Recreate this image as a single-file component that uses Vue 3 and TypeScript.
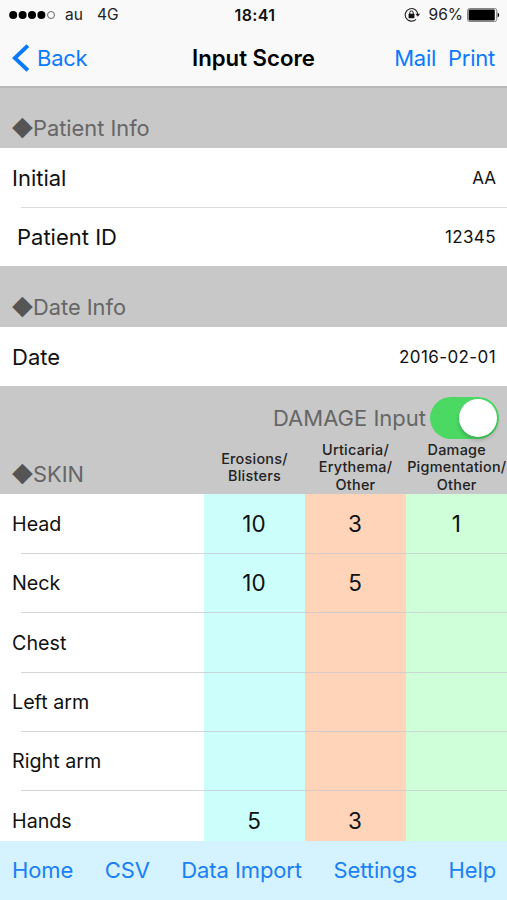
<script setup lang="ts">
import { ref } from 'vue'

interface ScoreRow {
  part: string
  scores: (number | null)[]
}

const damageInput = ref(true)

const rows: ScoreRow[] = [
  { part: 'Head', scores: [10, 3, 1] },
  { part: 'Neck', scores: [10, 5, null] },
  { part: 'Chest', scores: [null, null, null] },
  { part: 'Left arm', scores: [null, null, null] },
  { part: 'Right arm', scores: [null, null, null] },
  { part: 'Hands', scores: [5, 3, null] },
]

const columns: string[][] = [
  ['Erosions/', 'Blisters'],
  ['Urticaria/', 'Erythema/', 'Other'],
  ['Damage', 'Pigmentation/', 'Other'],
]

const tabs: string[] = ['Home', 'CSV', 'Data Import', 'Settings', 'Help']
</script>

<template>
  <div class="screen">
    <header class="top">
      <div class="status">
        <div class="carrier">
          <svg class="signal" width="47" height="10" viewBox="0 0 47 10">
            <circle cx="4.2" cy="5" r="4" />
            <circle cx="13.6" cy="5" r="4" />
            <circle cx="23" cy="5" r="4" />
            <circle cx="32.4" cy="5" r="4" />
            <circle cx="42" cy="5" r="3.5" fill="none" stroke="#555" stroke-width="0.9" />
          </svg>
          <span class="operator">au</span>
          <span>4G</span>
        </div>
        <span class="clock">18:41</span>
        <div class="power">
          <svg class="lock" width="17" height="16" viewBox="0 0 17 16">
            <path d="M12 12.3A6.3 6.3 0 1 1 13.8 7.2" fill="none" stroke="#222" stroke-width="1.1" />
            <path d="M11.4 6.8h4.8l-2.4 3z" fill="#222" />
            <rect x="4.6" y="6.8" width="5.8" height="4.4" rx="0.5" fill="#111" />
            <path d="M5.8 7V5.6a1.7 1.7 0 0 1 3.4 0V7" fill="none" stroke="#111" stroke-width="1" />
          </svg>
          <span class="percent">96%</span>
          <svg class="battery" width="33" height="14" viewBox="0 0 33 14">
            <rect x="0.5" y="0.5" width="29.2" height="13" rx="2" fill="none" stroke="#777" stroke-width="0.9" />
            <rect x="1.6" y="1.6" width="26.2" height="10.8" rx="0.8" />
            <path d="M30.6 4.6a2.6 2.6 0 0 1 0 4.8z" />
          </svg>
        </div>
      </div>
      <nav class="navbar">
        <a class="back">
          <svg width="17" height="28" viewBox="0 0 17 28">
            <path d="M15.8 1.6L2.8 14l13 12.4" fill="none" stroke="#0a7aff" stroke-width="3.9" />
          </svg>
          <span>Back</span>
        </a>
        <h1>Input Score</h1>
        <div class="actions"><a class="mail">Mail</a><a class="print">Print</a></div>
      </nav>
    </header>

    <h2 class="section"><span class="mark">◆</span>Patient Info</h2>
    <div class="row">
      <span>Initial</span><span class="value">AA</span>
    </div>
    <div class="row nested">
      <span>Patient ID</span><span class="value digits">12345</span>
    </div>

    <h2 class="section date-head"><span class="mark">◆</span>Date Info</h2>
    <div class="row date-row">
      <span>Date</span><span class="value digits">2016-02-01</span>
    </div>

    <section class="skin-head">
      <div class="toggle-line">
        <span class="toggle-label">DAMAGE Input</span>
        <button class="switch" :class="{ on: damageInput }" @click="damageInput = !damageInput">
          <span class="knob"></span>
        </button>
      </div>
      <div class="skin-columns">
        <h2 class="skin-title"><span class="mark">◆</span>SKIN</h2>
        <div v-for="(lines, i) in columns" :key="i" class="column-name">
          <span v-for="line in lines" :key="line">{{ line }}</span>
        </div>
      </div>
    </section>

    <main class="scores">
      <div v-for="row in rows" :key="row.part" class="score-row">
        <span class="part">{{ row.part }}</span>
        <span v-for="(score, i) in row.scores" :key="i" class="score" :class="'tone-' + i">{{ score }}</span>
      </div>
    </main>

    <footer class="toolbar">
      <a v-for="tab in tabs" :key="tab">{{ tab }}</a>
    </footer>
  </div>
</template>

<style>
body {
  margin: 0;
}
</style>

<style scoped>
.screen {
  width: 507px;
  height: 900px;
  overflow: hidden;
  display: flex;
  flex-direction: column;
  background: #fff;
  color: #111;
  font-family: Inter, "Liberation Sans", sans-serif;
  font-size: 22px;
  line-height: 26px;
}
.screen > * {
  flex-shrink: 0;
}
h1,
h2 {
  margin: 0;
  font-weight: 400;
}
.top {
  height: 88px;
  box-sizing: border-box;
  background: #f9f9f9;
  border-bottom: 2px solid #b8b8b8;
}
.status {
  height: 30px;
  display: grid;
  grid-template-columns: 1fr auto 1fr;
  align-items: center;
  padding: 0 7px 0 9px;
  font-size: 15.5px;
  color: #222;
}
.carrier,
.power {
  display: flex;
  align-items: center;
}
.power {
  justify-content: flex-end;
}
.signal,
.lock,
.battery {
  position: relative;
  top: -0.5px;
}
.operator {
  margin: 0 14px 0 9px;
}
.clock {
  font-size: 16px;
  font-weight: 600;
  letter-spacing: 0.4px;
  padding-left: 1px;
  color: #111;
}
.percent {
  margin: 0 4px 0 8px;
}
.navbar {
  height: 56px;
  display: grid;
  grid-template-columns: 1fr auto 1fr;
  align-items: center;
  padding: 0 12px;
}
.navbar a {
  color: #0a7aff;
  letter-spacing: -0.25px;
}
.back {
  display: flex;
  align-items: center;
  gap: 8px;
}
h1 {
  font-size: 22.2px;
  font-weight: 600;
  color: #000;
}
.actions {
  display: flex;
  justify-content: flex-end;
  gap: 12px;
}
.section {
  height: 60px;
  box-sizing: border-box;
  padding: 27px 12px 0;
  display: flex;
  background: #c8c8c8;
  color: #666;
  font-size: 21.8px;
  line-height: 26px;
}
.mark {
  width: 21px;
  font-family: "DejaVu Sans", sans-serif;
  font-size: 27px;
  line-height: 22px;
  color: #555;
}
.row {
  height: 59px;
  box-sizing: border-box;
  display: flex;
  align-items: center;
  justify-content: space-between;
  padding: 1px 11px 0 12px;
}
.nested {
  padding-left: 17px;
  background: linear-gradient(#dcdcdc, #dcdcdc) 21px 0 / 100% 1px no-repeat;
}
.value {
  font-size: 17px;
}
.digits {
  letter-spacing: 0.4px;
}
.date-head {
  height: 61px;
  padding-top: 28px;
}
.skin-head {
  height: 108px;
  background: #c8c8c8;
}
.toggle-line {
  height: 54px;
  box-sizing: border-box;
  padding: 11px 8px 0 0;
  display: flex;
  justify-content: flex-end;
  align-items: flex-start;
}
.toggle-label {
  padding-top: 8px;
  color: #666;
}
.switch {
  width: 69px;
  height: 42px;
  margin-left: 4px;
  padding: 2px;
  border: 0;
  border-radius: 21px;
  background: #ddd;
  display: flex;
}
.switch.on {
  background: #4bd964;
  justify-content: flex-end;
}
.knob {
  width: 38px;
  height: 38px;
  border-radius: 50%;
  background: #fff;
  box-shadow: 0 3px 4px rgba(0, 0, 0, 0.2);
}
.skin-columns {
  height: 54px;
  display: grid;
  grid-template-columns: 203.5px 101px 101px 101.5px;
}
.skin-title {
  display: flex;
  padding: 21px 12px 0;
  font-size: 21.8px;
  line-height: 26px;
  color: #666;
}
.column-name {
  display: flex;
  flex-direction: column;
  align-items: center;
  justify-content: center;
  padding-left: 1px;
  font-size: 14.4px;
  font-weight: 500;
  letter-spacing: 0.25px;
  line-height: 17.4px;
  white-space: nowrap;
  color: #222;
}
.scores {
  height: 346.5px;
  overflow: hidden;
}
.score-row {
  height: 59.35px;
  display: grid;
  grid-template-columns: 203.5px 101px 101px 101.5px;
  position: relative;
}
.score-row + .score-row::before {
  content: "";
  position: absolute;
  left: 21px;
  right: 0;
  top: -0.5px;
  height: 1px;
  background: rgba(200, 200, 205, 0.75);
}
.part {
  padding-left: 12px;
  line-height: 60px;
  font-size: 19.7px;
}
.score {
  line-height: 60px;
  font-size: 22.5px;
  text-align: center;
}
.tone-0 {
  background: #ccfffb;
}
.tone-1 {
  background: #ffd4b9;
}
.tone-2 {
  background: #ceffd8;
}
.toolbar {
  height: 59.5px;
  box-sizing: border-box;
  display: flex;
  justify-content: space-between;
  align-items: center;
  padding: 0 11px 0 12px;
  background: #d4f2ff;
  color: #1a80f5;
  letter-spacing: -0.1px;
}
</style>
